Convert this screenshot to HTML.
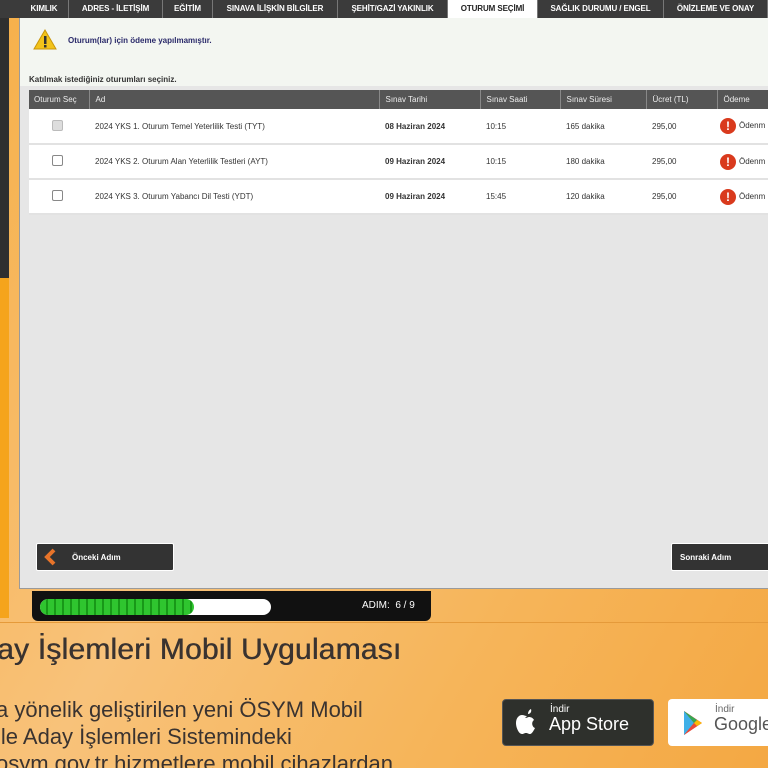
<!DOCTYPE html>
<html><head><meta charset="utf-8"><style>
*{margin:0;padding:0;box-sizing:border-box}
html,body{width:768px;height:768px;overflow:hidden}
body{position:relative;font-family:"Liberation Sans",sans-serif;background:linear-gradient(120deg,#f6b04a 0%,#f8c27a 40%,#f6b55a 70%,#f4a843 100%)}
.abs{position:absolute}
.tabs{left:0;top:0;width:768px;height:18px;background:#3b3b3b}
.tab{position:absolute;top:0;color:#fff;font-size:8px;font-weight:bold;line-height:18px;text-align:center;border-right:1px solid #777;white-space:nowrap;letter-spacing:-0.1px}
.tab.act{background:#fff;color:#222}
.panel{left:19px;top:18px;width:760px;height:571px;background:#e6e6e6;border:1px solid #9a9a9a}
.top{left:20px;top:18px;width:748px;height:68px;background:#f3f6f1}
table{border-collapse:collapse;font-size:8px;color:#333}
th{background:#555;color:#eee;font-weight:normal;text-align:left;height:19px;padding-left:6px;border-right:1px solid #888}
td{background:#fff;height:35px;padding-left:6px;border-bottom:2px solid #e2e2e2}
.cb{width:11px;height:11px;border:1px solid #888;border-radius:2px;background:#fff;display:inline-block;margin-left:17px}
.ex{display:inline-block;width:16px;height:16px;border-radius:50%;background:#d93a1d;color:#fff;font-weight:bold;font-size:12px;text-align:center;line-height:16px;vertical-align:middle;margin-right:3px}
.btn{background:#333;color:#fff;font-size:8px;font-weight:bold;height:28px;line-height:28px;border:1px solid #fff;border-radius:2px}
</style></head><body>
<div class="abs" style="left:0;top:0;width:9px;height:278px;background:#2f2f2f"></div>
<div class="abs" style="left:0;top:278px;width:9px;height:340px;background:#f5a41c"></div>
<div class="abs panel"></div>
<div class="abs top"></div>
<div class="abs tabs">
<div class="tab" style="left:20px;width:49px">KIMLIK</div>
<div class="tab" style="left:69px;width:94px">ADRES - İLETİŞİM</div>
<div class="tab" style="left:163px;width:50px">EĞİTİM</div>
<div class="tab" style="left:213px;width:125px">SINAVA İLİŞKİN BİLGİLER</div>
<div class="tab" style="left:338px;width:110px">ŞEHİT/GAZİ YAKINLIK</div>
<div class="tab act" style="left:448px;width:90px">OTURUM SEÇİMİ</div>
<div class="tab" style="left:538px;width:126px">SAĞLIK DURUMU / ENGEL</div>
<div class="tab" style="left:664px;width:104px">ÖNİZLEME VE ONAY</div>
</div>
<svg class="abs" style="left:33px;top:29px" width="24" height="22"><polygon points="12,1 23,20 1,20" fill="#f2c31a" stroke="#c9960a"/><rect x="11" y="7" width="2.5" height="8" fill="#333"/><rect x="11" y="16" width="2.5" height="2.5" fill="#333"/></svg>
<div class="abs" style="left:68px;top:36px;font-size:8px;font-weight:bold;color:#2a2a6a">Oturum(lar) için ödeme yapılmamıştır.</div>
<div class="abs" style="left:29px;top:75px;font-size:8px;font-weight:bold;color:#333">Katılmak istediğiniz oturumları seçiniz.</div>
<table class="abs" style="left:29px;top:90px;width:740px">
<tr><th style="width:60px;padding-left:5px">Oturum Seç</th><th style="width:290px">Ad</th><th style="width:101px">Sınav Tarihi</th><th style="width:80px">Sınav Saati</th><th style="width:86px">Sınav Süresi</th><th style="width:71px">Ücret (TL)</th><th>Ödeme</th></tr>
<tr><td><span class="cb" style="background:#ddd;border-color:#bbb"></span></td><td>2024 YKS 1. Oturum Temel Yeterlilik Testi (TYT)</td><td><b>08 Haziran 2024</b></td><td>10:15</td><td>165 dakika</td><td>295,00</td><td style="padding-left:3px"><span class="ex">!</span>Ödenm</td></tr>
<tr><td><span class="cb"></span></td><td>2024 YKS 2. Oturum Alan Yeterlilik Testleri (AYT)</td><td><b>09 Haziran 2024</b></td><td>10:15</td><td>180 dakika</td><td>295,00</td><td style="padding-left:3px"><span class="ex">!</span>Ödenm</td></tr>
<tr><td><span class="cb"></span></td><td>2024 YKS 3. Oturum Yabancı Dil Testi (YDT)</td><td><b>09 Haziran 2024</b></td><td>15:45</td><td>120 dakika</td><td>295,00</td><td style="padding-left:3px"><span class="ex">!</span>Ödenm</td></tr>
</table>
<div class="abs btn" style="left:36px;top:543px;width:138px;padding-left:35px">Önceki Adım</div>
<svg class="abs" style="left:42px;top:548px" width="16" height="18"><polyline points="12,2 5,9 12,16" fill="none" stroke="#e8742a" stroke-width="4"/></svg>
<div class="abs btn" style="left:671px;top:543px;width:110px;padding-left:8px">Sonraki Adım</div>
<div class="abs" style="left:32px;top:591px;width:399px;height:30px;background:#111;border-radius:0 0 6px 6px"></div>
<div class="abs" style="left:40px;top:599px;width:231px;height:16px;background:#fff;border-radius:8px"></div>
<div class="abs" style="left:40px;top:599px;width:154px;height:16px;border-radius:8px;background:repeating-linear-gradient(90deg,#2fc52f 0 6px,#189818 6px 8px)"></div>
<div class="abs" style="left:362px;top:600px;color:#fff;font-size:10px">ADIM:&nbsp; 6 / 9</div>
<div class="abs" style="left:0;top:622px;width:768px;height:1px;background:#e59a3a"></div>
<div class="abs" style="left:-3px;top:633px;font-size:30px;letter-spacing:0.2px;color:#3a3330;white-space:nowrap;text-shadow:0.5px 0 0 #3a3330">ay İşlemleri Mobil Uygulaması</div>
<div class="abs" style="left:-4px;top:696px;font-size:22px;line-height:27px;color:#3a3330;white-space:nowrap">a yönelik geliştirilen yeni ÖSYM Mobil<br>ile Aday İşlemleri Sistemindeki<br>osym.gov.tr hizmetlere mobil cihazlardan</div>
<div class="abs" style="left:502px;top:699px;width:152px;height:47px;background:#2e302c;border-radius:4px;border:1px solid #555"></div>
<svg class="abs" style="left:514px;top:706px" width="26" height="30"><path d="M17 3c-2 1-3 3-3 5 2 0 4-2 3-5zM13 10c-2 0-3-1-5-1-3 0-6 3-6 8 0 5 3 11 6 11 2 0 2-1 4-1s2 1 4 1c2 0 4-4 5-6-3-1-4-6-1-8-1-2-3-3-5-3-1 0-2 1-4 1z" fill="#fff"/></svg>
<div class="abs" style="left:550px;top:704px;color:#fff;font-size:10px">İndir</div>
<div class="abs" style="left:549px;top:714px;color:#fff;font-size:18px">App Store</div>
<div class="abs" style="left:668px;top:699px;width:110px;height:47px;background:#fff;border-radius:4px"></div>
<svg class="abs" style="left:682px;top:710px" width="22" height="26"><polygon points="2,1 20,13 2,25" fill="#e94a3a"/><polygon points="2,1 12,13 2,25" fill="#3fb0e8"/><polygon points="2,1 15,10 12,13" fill="#34a853"/><polygon points="2,25 15,16 12,13" fill="#e94a3a"/><polygon points="15,10 20,13 15,16 12,13" fill="#fbbc05"/></svg>
<div class="abs" style="left:715px;top:704px;color:#666;font-size:10px">İndir</div>
<div class="abs" style="left:714px;top:714px;color:#555;font-size:18px">Google</div>
</body></html>
